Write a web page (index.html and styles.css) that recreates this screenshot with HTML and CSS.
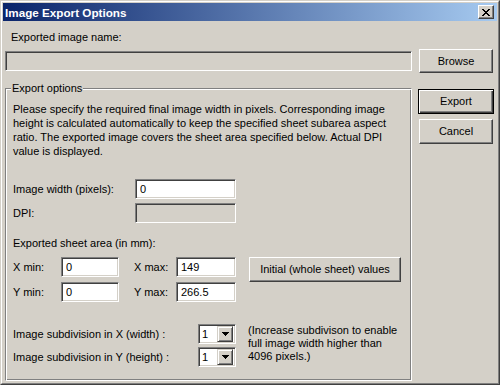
FILE: index.html
```html
<!DOCTYPE html>
<html>
<head>
<meta charset="utf-8">
<title>Image Export Options</title>
<link rel="stylesheet" href="styles.css">
</head>
<body>
<div class="window">
  <div class="frame">
    <div class="titlebar">
      <span class="title">Image Export Options</span>
      <span class="close">
        <svg width="8" height="7" viewBox="0 0 8 7" shape-rendering="crispEdges">
          <path fill="#000" d="M0 0h2v1H0zM6 0h2v1H6zM1 1h2v1H1zM5 1h2v1H5zM2 2h4v1H2zM3 3h2v1H3zM2 4h4v1H2zM1 5h2v1H1zM5 5h2v1H5zM0 6h2v1H0zM6 6h2v1H6z"/>
        </svg>
      </span>
    </div>
    <div class="content">
      <div class="name-label">Exported image name:</div>
      <input class="field disabled" type="text" readonly>
      <button class="btn browse">Browse</button>

      <fieldset class="group">
        <legend>Export options</legend>
        <p class="intro">Please specify the required final image width in pixels. Corresponding image<br>height is calculated automatically to keep the specified sheet subarea aspect<br>ratio. The exported image covers the sheet area specified below. Actual DPI<br>value is displayed.</p>

        <div class="size-grid">
          <span class="lbl">Image width (pixels):</span>
          <input class="field" type="text" value="0" readonly>
          <span class="lbl">DPI:</span>
          <input class="field disabled" type="text" readonly>
        </div>

        <div class="area-label">Exported sheet area (in mm):</div>
        <div class="area-grid">
          <span class="lbl">X min:</span>
          <input class="field w58" type="text" value="0" readonly>
          <span class="lbl max">X max:</span>
          <input class="field w60" type="text" value="149" readonly>
          <button class="btn initial">Initial (whole sheet) values</button>
          <span class="lbl">Y min:</span>
          <input class="field w58" type="text" value="0" readonly>
          <span class="lbl max">Y max:</span>
          <input class="field w60" type="text" value="266.5" readonly>
        </div>

        <div class="sub-grid">
          <span class="lbl">Image subdivision in X (width) :</span>
          <div class="select"><span class="val">1</span><span class="drop"><svg width="7" height="4" viewBox="0 0 7 4" shape-rendering="crispEdges"><path fill="#000" d="M0 0h7v1H0zM1 1h5v1H1zM2 2h3v1H2zM3 3h1v1H3z"/></svg></span></div>
          <div class="note">(Increase subdivison to enable<br>full image width higher than<br>4096 pixels.)</div>
          <span class="lbl">Image subdivision in Y (height) :</span>
          <div class="select"><span class="val">1</span><span class="drop"><svg width="7" height="4" viewBox="0 0 7 4" shape-rendering="crispEdges"><path fill="#000" d="M0 0h7v1H0zM1 1h5v1H1zM2 2h3v1H2zM3 3h1v1H3z"/></svg></span></div>
        </div>
      </fieldset>

      <div class="side-buttons">
        <button class="btn default">Export</button>
        <button class="btn cancel">Cancel</button>
      </div>
    </div>
  </div>
</div>
</body>
</html>
```

FILE: styles.css
```css
* { box-sizing: border-box; }

html, body {
  margin: 0;
  padding: 0;
}

body {
  width: 500px;
  height: 385px;
  overflow: hidden;
  background: #d4d0c8;
  font-family: "Liberation Sans", Arial, sans-serif;
  font-size: 11px;
  line-height: 13px;
  color: #000;
}

.window {
  width: 500px;
  height: 385px;
  border: 1px solid;
  border-color: #d4d0c8 #404040 #404040 #d4d0c8;
  background: #d4d0c8;
}

.frame {
  height: 100%;
  border: 1px solid;
  border-color: #fff #808080 #808080 #fff;
  padding: 1px;
}

.titlebar {
  height: 18px;
  display: flex;
  align-items: center;
  justify-content: space-between;
  padding: 0 3px 0 2px;
  background: linear-gradient(to right, #0a246a, #a6caf0);
}

.title {
  color: #fff;
  font-weight: bold;
  font-size: 11.7px;
}

.close {
  width: 16px;
  height: 14px;
  display: flex;
  align-items: center;
  justify-content: center;
  background: #d4d0c8;
  border: 1px solid;
  border-color: #fff #404040 #404040 #fff;
  box-shadow: inset -1px -1px #808080;
}

.content {
  display: grid;
  grid-template-columns: 407px 76px;
  column-gap: 6px;
  padding-left: 2px;
  align-items: center;
}

.name-label {
  grid-column: 1 / 3;
  margin-top: 10px;
  margin-bottom: 5px;
  padding-left: 6px;
}

.field {
  display: block;
  height: 20px;
  margin: 0;
  padding: 0 4px;
  font: inherit;
  color: #000;
  background: #fff;
  border: 1px solid;
  border-color: #808080 #fff #fff #808080;
  border-radius: 0;
  box-shadow: inset 1px 1px #404040, inset -1px -1px #d4d0c8;
  outline: none;
}

.field.disabled { background: #d4d0c8; }

.content > .field { width: 407px; }

.btn {
  margin: 0;
  padding: 0;
  font: inherit;
  color: #000;
  background: #d4d0c8;
  border: 1px solid;
  border-color: #fff #404040 #404040 #fff;
  border-radius: 0;
  box-shadow: inset -1px -1px #808080;
}

.browse {
  width: 74px;
  height: 24px;
  margin-left: 1px;
}

.group {
  align-self: start;
  margin: 9px 0 0;
  padding: 0 0 13px 7px;
  min-width: 0;
  width: 407px;
  border: 1px solid;
  border-color: #808080 #fff #fff #808080;
  box-shadow: inset 1px 1px #fff, inset -1px -1px #808080;
}

.group legend {
  margin-left: -2px;
  padding: 0 1px;
  background: #d4d0c8;
  line-height: 13px;
}

.intro {
  margin: 7px 0 0;
  line-height: 14px;
}

.size-grid {
  margin-top: 21px;
  display: grid;
  grid-template-columns: 122px 101px;
  row-gap: 4px;
  align-items: center;
}

.size-grid .field { width: 101px; }

.area-label { margin-top: 14px; }

.area-grid {
  margin-top: 7px;
  display: grid;
  grid-template-columns: 48px 58px 57px 60px 165px;
  row-gap: 5px;
  align-items: center;
}

.area-grid .max { padding-left: 15px; }
.w58 { width: 58px; }
.w60 { width: 60px; }

.initial {
  grid-column: 5;
  grid-row: 1 / 3;
  align-self: start;
  width: 152px;
  height: 25px;
  margin-left: 13px;
}

.sub-grid {
  margin-top: 22px;
  display: grid;
  grid-template-columns: 185px 38px auto;
  row-gap: 3px;
  align-items: center;
}

.select {
  width: 38px;
  height: 20px;
  display: flex;
  align-items: center;
  justify-content: space-between;
  padding: 2px;
  background: #fff;
  border: 1px solid;
  border-color: #808080 #fff #fff #808080;
  box-shadow: inset 1px 1px #404040, inset -1px -1px #d4d0c8;
}

.select .val { padding-left: 1px; }

.drop {
  width: 16px;
  height: 16px;
  display: flex;
  align-items: center;
  justify-content: center;
  background: #d4d0c8;
  border: 1px solid;
  border-color: #d4d0c8 #404040 #404040 #d4d0c8;
  box-shadow: inset 1px 1px #fff, inset -1px -1px #808080;
}

.note {
  grid-column: 3;
  grid-row: 1 / 3;
  align-self: start;
  padding-left: 12px;
  line-height: 13px;
}

.side-buttons {
  align-self: start;
  margin-top: 16px;
  display: flex;
  flex-direction: column;
  align-items: flex-start;
  gap: 5px;
}

.default {
  width: 76px;
  height: 25px;
  border: 1px solid #000;
  box-shadow: inset 1px 1px #fff, inset -1px -1px #404040, inset -2px -2px #808080;
}

.cancel {
  width: 74px;
  height: 25px;
  margin-left: 1px;
}
```
